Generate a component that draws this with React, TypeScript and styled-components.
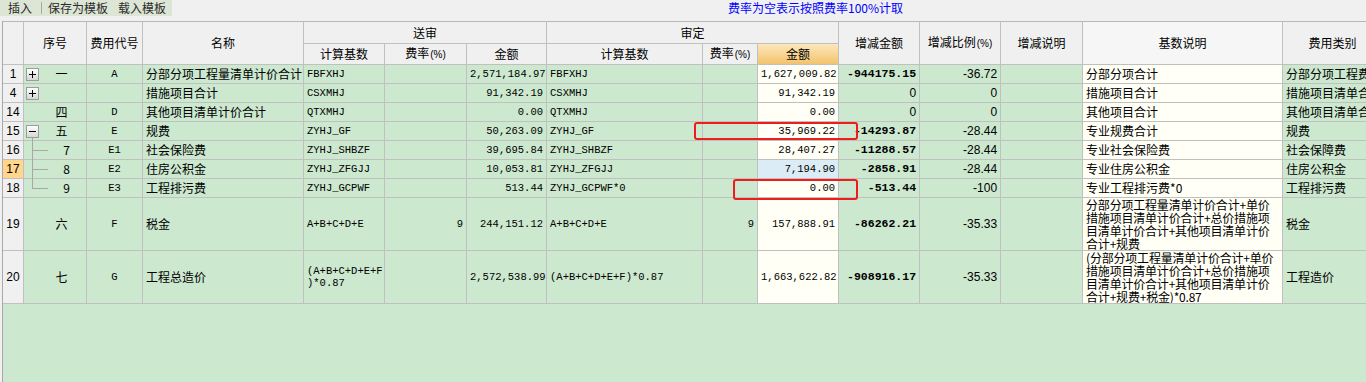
import React from 'react'
import styled, { createGlobalStyle } from 'styled-components'

const GREEN = '#cce8cf'
const IVORY = '#fffff6'
const LINE = '#c0c0c0'

type Tree = 'plus' | 'minus' | 'child' | 'last'
type Tone = 'green' | 'ivory' | 'blue' | 'head' | 'current'

interface FeeRow {
  no: string
  seq?: string
  tree?: Tree
  code?: string
  name: string
  sBase: string[]
  sRate?: string
  sAmt: string
  dBase: string
  dRate?: string
  dAmt: string
  diff: string
  pct: string
  baseDesc: string[]
  type: string
  tall?: boolean
  current?: boolean
}

const TAX_DESC = [
  '分部分项工程量清单计价合计+单价',
  '措施项目清单计价合计+总价措施项',
  '目清单计价合计+其他项目清单计价',
  '合计+规费',
]

const TOTAL_DESC = [
  '(分部分项工程量清单计价合计+单价',
  '措施项目清单计价合计+总价措施项',
  '目清单计价合计+其他项目清单计价',
  '合计+规费+税金)*0.87',
]

const rows: FeeRow[] = [
  { no: '1', seq: '一', tree: 'plus', code: 'A', name: '分部分项工程量清单计价合计', sBase: ['FBFXHJ'], sAmt: '2,571,184.97', dBase: 'FBFXHJ', dAmt: '1,627,009.82', diff: '-944175.15', pct: '-36.72', baseDesc: ['分部分项合计'], type: '分部分项工程费' },
  { no: '4', tree: 'plus', name: '措施项目合计', sBase: ['CSXMHJ'], sAmt: '91,342.19', dBase: 'CSXMHJ', dAmt: '91,342.19', diff: '0', pct: '0', baseDesc: ['措施项目合计'], type: '措施项目清单合计' },
  { no: '14', seq: '四', code: 'D', name: '其他项目清单计价合计', sBase: ['QTXMHJ'], sAmt: '0.00', dBase: 'QTXMHJ', dAmt: '0.00', diff: '0', pct: '0', baseDesc: ['其他项目合计'], type: '其他项目清单合计' },
  { no: '15', seq: '五', tree: 'minus', code: 'E', name: '规费', sBase: ['ZYHJ_GF'], sAmt: '50,263.09', dBase: 'ZYHJ_GF', dAmt: '35,969.22', diff: '-14293.87', pct: '-28.44', baseDesc: ['专业规费合计'], type: '规费' },
  { no: '16', seq: '7', tree: 'child', code: 'E1', name: '社会保险费', sBase: ['ZYHJ_SHBZF'], sAmt: '39,695.84', dBase: 'ZYHJ_SHBZF', dAmt: '28,407.27', diff: '-11288.57', pct: '-28.44', baseDesc: ['专业社会保险费'], type: '社会保障费' },
  { no: '17', seq: '8', tree: 'child', code: 'E2', name: '住房公积金', sBase: ['ZYHJ_ZFGJJ'], sAmt: '10,053.81', dBase: 'ZYHJ_ZFGJJ', dAmt: '7,194.90', diff: '-2858.91', pct: '-28.44', baseDesc: ['专业住房公积金'], type: '住房公积金', current: true },
  { no: '18', seq: '9', tree: 'last', code: 'E3', name: '工程排污费', sBase: ['ZYHJ_GCPWF'], sAmt: '513.44', dBase: 'ZYHJ_GCPWF*0', dAmt: '0.00', diff: '-513.44', pct: '-100', baseDesc: ['专业工程排污费*0'], type: '工程排污费' },
  { no: '19', seq: '六', code: 'F', name: '税金', sBase: ['A+B+C+D+E'], sRate: '9', sAmt: '244,151.12', dBase: 'A+B+C+D+E', dRate: '9', dAmt: '157,888.91', diff: '-86262.21', pct: '-35.33', baseDesc: TAX_DESC, type: '税金', tall: true },
  { no: '20', seq: '七', code: 'G', name: '工程总造价', sBase: ['(A+B+C+D+E+F', ')*0.87'], sAmt: '2,572,538.99', dBase: '(A+B+C+D+E+F)*0.87', dAmt: '1,663,622.82', diff: '-908916.17', pct: '-35.33', baseDesc: TOTAL_DESC, type: '工程造价', tall: true },
]

const columns = [21, 63, 56, 161, 81, 82, 80, 156, 55, 81, 81, 81, 82, 200, 100]

const App = () => {
  return (
    <Page>
      <GlobalStyle />
      <Toolbar>
        <ToolGroup>
          <ToolButton>插入</ToolButton>
          <ToolSep />
          <ToolButton>保存为模板</ToolButton>
          <ToolButton>载入模板</ToolButton>
        </ToolGroup>
        <Notice>费率为空表示按照费率100%计取</Notice>
      </Toolbar>

      <GridArea>
        <Sheet>
          <colgroup>
            {columns.map((w, i) => (
              <Col key={i} $w={w} />
            ))}
          </colgroup>
          <thead>
            <HeadRow $h={22}>
              <HeadCell rowSpan={2} />
              <HeadCell rowSpan={2}>序号</HeadCell>
              <HeadCell rowSpan={2}>费用代号</HeadCell>
              <HeadCell rowSpan={2}>名称</HeadCell>
              <HeadCell colSpan={3}>送审</HeadCell>
              <HeadCell colSpan={3}>审定</HeadCell>
              <HeadCell rowSpan={2}>增减金额</HeadCell>
              <HeadCell rowSpan={2}>
                增减比例<Small>(%)</Small>
              </HeadCell>
              <HeadCell rowSpan={2}>增减说明</HeadCell>
              <HeadCell rowSpan={2} $light>
                基数说明
              </HeadCell>
              <HeadCell rowSpan={2}>费用类别</HeadCell>
            </HeadRow>
            <HeadRow $h={21}>
              <HeadCell>计算基数</HeadCell>
              <HeadCell>
                费率<Small>(%)</Small>
              </HeadCell>
              <HeadCell>金额</HeadCell>
              <HeadCell>计算基数</HeadCell>
              <HeadCell>
                费率<Small>(%)</Small>
              </HeadCell>
              <HeadCell $active>金额</HeadCell>
            </HeadRow>
          </thead>
          <tbody>
            {rows.map((r) => (
              <DataRow key={r.no} $h={r.tall ? 53 : 19}>
                <Cell $tone={r.current ? 'current' : 'head'} $align="center" $font="sans">
                  {r.no}
                </Cell>
                <SeqCell $indent={r.tree === 'child' || r.tree === 'last' ? 26 : 16}>
                  {(r.tree === 'plus' || r.tree === 'minus') && (
                    <Expander>
                      <svg width="7" height="7" viewBox="0 0 7 7">
                        <path d="M0 3.5H7" stroke="#000" strokeWidth="1" />
                        {r.tree === 'plus' && <path d="M3.5 0V7" stroke="#000" strokeWidth="1" />}
                      </svg>
                    </Expander>
                  )}
                  {r.tree === 'minus' && <TreeStem $from={16} $to="-1px" />}
                  {r.tree === 'child' && <TreeStem $from={0} $to="-1px" />}
                  {r.tree === 'last' && <TreeStem $from={0} $to="50%" />}
                  {(r.tree === 'child' || r.tree === 'last') && <TreeBranch />}
                  {r.seq}
                </SeqCell>
                <Cell $align="center" $font="mono">
                  {r.code}
                </Cell>
                <Cell>{r.name}</Cell>
                <Cell $font="mono">
                  {r.sBase.map((l) => (
                    <Line key={l}>{l}</Line>
                  ))}
                </Cell>
                <Cell $align="right" $font="mono">
                  {r.sRate}
                </Cell>
                <Cell $align="right" $font="mono">
                  {r.sAmt}
                </Cell>
                <Cell $font="mono">{r.dBase}</Cell>
                <Cell $align="right" $font="mono">
                  {r.dRate}
                </Cell>
                <Cell $align="right" $font="mono" $tone={r.current ? 'blue' : 'ivory'}>
                  {r.dAmt}
                </Cell>
                <Cell $align="right" $font={r.diff === '0' ? 'sans' : 'bold'}>
                  {r.diff}
                </Cell>
                <Cell $align="right" $font="sans">
                  {r.pct}
                </Cell>
                <Cell />
                <Cell $tone="ivory">
                  {r.baseDesc.length > 1
                    ? r.baseDesc.map((l) => <WrapLine key={l}>{l}</WrapLine>)
                    : r.baseDesc[0]}
                </Cell>
                <Cell>{r.type}</Cell>
              </DataRow>
            ))}
          </tbody>
        </Sheet>
      </GridArea>

      <Mark $x={694} $y={122} $w={164} $h={18} />
      <Mark $x={733} $y={179} $w={125} $h={21} />
    </Page>
  )
}

export default App

const GlobalStyle = createGlobalStyle`
  html, body {
    margin: 0;
    padding: 0;
    background: #f0f0f0;
    overflow: hidden;
  }
  body {
    font-family: "Noto Sans CJK SC", "Liberation Sans", sans-serif;
    font-size: 12px;
    color: #000;
  }
`

const Page = styled.div`
  position: relative;
  width: 1366px;
  height: 382px;
  display: flex;
  flex-direction: column;
  overflow: hidden;
`

const Toolbar = styled.div`
  flex: none;
  height: 21px;
  display: flex;
  align-items: flex-start;
`

const ToolGroup = styled.div`
  height: 16px;
  display: flex;
  align-items: center;
  padding: 0 6px 0 8px;
  background: #dde6d5;
`

const ToolButton = styled.span`
  line-height: 16px;
  color: #2b2b2b;
  white-space: nowrap;
  & + & {
    margin-left: 10px;
  }
`

const ToolSep = styled.span`
  width: 1px;
  height: 12px;
  background: #a6a6a6;
  margin: 0 6px 0 9px;
`

const Notice = styled.span`
  margin-left: 556px;
  line-height: 16px;
  color: #0000ff;
  white-space: nowrap;
`

const GridArea = styled.div`
  flex: 1;
  margin-left: 2px;
  border-left: 1px solid #a9a9a9;
  border-top: 1px solid #b8b8b8;
  background: ${GREEN};
  overflow: hidden;
`

const Sheet = styled.table`
  border-collapse: separate;
  border-spacing: 0;
  table-layout: fixed;
  width: 1380px;
`

const Col = styled.col<{ $w: number }>`
  width: ${(p) => p.$w}px;
`

const HeadRow = styled.tr<{ $h: number }>`
  height: ${(p) => p.$h}px;
`

const HeadCell = styled.th<{ $active?: boolean; $light?: boolean }>`
  box-sizing: border-box;
  padding: 0;
  border-right: 1px solid ${LINE};
  border-bottom: 1px solid ${LINE};
  background: ${(p) =>
    p.$active
      ? 'linear-gradient(#fde8bb, #f3c36c)'
      : p.$light
        ? '#f6f6f6'
        : '#f0f0f0'};
  font-weight: normal;
  line-height: 16px;
  text-align: center;
  vertical-align: middle;
  white-space: nowrap;
  color: #000;
`

const Small = styled.span`
  font-family: "Liberation Sans", sans-serif;
  font-size: 10px;
  margin-left: 1px;
`

const DataRow = styled.tr<{ $h: number }>`
  height: ${(p) => p.$h}px;
`

const toneColor: Record<Tone, string> = {
  green: GREEN,
  ivory: IVORY,
  blue: '#dcecf7',
  head: '#f0f0f0',
  current: '#ffd68c',
}

const fontStyle = {
  cjk: 'font-family: "Noto Sans CJK SC", sans-serif; font-size: 12px;',
  mono: 'font-family: "Liberation Mono", "Noto Sans CJK SC", monospace; font-size: 10.5px;',
  bold: 'font-family: "Liberation Mono", monospace; font-size: 11.5px; font-weight: bold;',
  sans: 'font-family: "Liberation Sans", sans-serif; font-size: 12px;',
}

const Cell = styled.td<{
  $tone?: Tone
  $align?: 'left' | 'center' | 'right'
  $font?: keyof typeof fontStyle
}>`
  box-sizing: border-box;
  padding: 0 3px;
  border-right: 1px solid ${LINE};
  border-bottom: 1px solid ${LINE};
  background: ${(p) => toneColor[p.$tone || 'green']};
  text-align: ${(p) => p.$align || 'left'};
  vertical-align: middle;
  line-height: 16px;
  white-space: nowrap;
  overflow: hidden;
  ${(p) => fontStyle[p.$font || 'cjk']}
`

const SeqCell = styled(Cell)<{ $indent: number }>`
  position: relative;
  overflow: visible;
  padding-left: ${(p) => p.$indent}px;
  text-align: center;
`

const Expander = styled.span`
  position: absolute;
  left: 2px;
  top: 3px;
  width: 11px;
  height: 11px;
  border: 1px solid #9c9c9c;
  background: linear-gradient(#ffffff, #d6d6d6);
  display: flex;
  align-items: center;
  justify-content: center;
  z-index: 1;
  svg {
    display: block;
  }
`

const TreeStem = styled.span<{ $from: number; $to: string }>`
  position: absolute;
  left: 8px;
  top: ${(p) => p.$from}px;
  bottom: ${(p) => p.$to};
  width: 1px;
  background: #a8a8a8;
`

const TreeBranch = styled.span`
  position: absolute;
  left: 8px;
  top: 50%;
  width: 16px;
  height: 1px;
  background: #a8a8a8;
`

const Line = styled.div`
  line-height: 12px;
`

const WrapLine = styled.div`
  line-height: 13px;
  letter-spacing: -0.2px;
`

const Mark = styled.div<{ $x: number; $y: number; $w: number; $h: number }>`
  position: absolute;
  left: ${(p) => p.$x}px;
  top: ${(p) => p.$y}px;
  width: ${(p) => p.$w}px;
  height: ${(p) => p.$h}px;
  box-sizing: border-box;
  border: 2px solid #ee1d1d;
  border-radius: 3px;
  pointer-events: none;
`
